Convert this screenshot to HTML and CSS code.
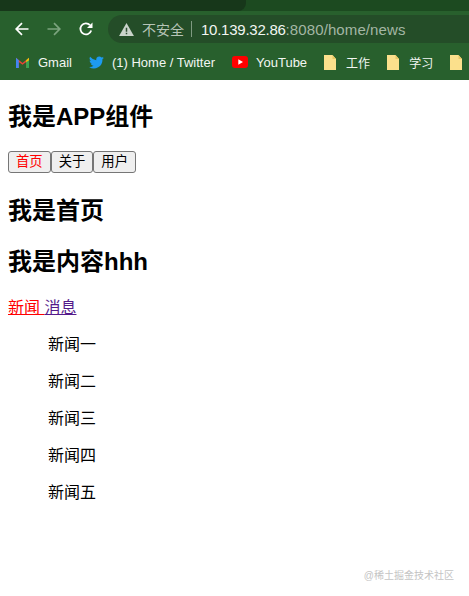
FILE: index.html
```html
<!DOCTYPE html>
<html lang="zh-CN">
<head>
    <meta charset="UTF-8">
    <title>Document</title>
    <link rel="stylesheet" href="styles.css">
</head>
<body>
  <div class="browser">
    <div class="tabstrip"><div class="tab"></div></div>
    <div class="toolbar">
      <svg class="nav" viewBox="0 0 16 16"><path d="M14.5 8H2.5M8 2.2L2.2 8L8 13.8" fill="none" stroke="#fff" stroke-width="1.7"/></svg>
      <svg class="nav" viewBox="0 0 16 16"><path d="M1.5 8H13.5M8 2.2L13.8 8L8 13.8" fill="none" stroke="#7ba37e" stroke-width="1.7"/></svg>
      <svg class="nav" viewBox="0 0 16 16"><path d="M13.2 9.5A5.5 5.5 0 1 1 12 4.2" fill="none" stroke="#fff" stroke-width="1.8"/><path d="M14.5 1.5V7H9Z" fill="#fff"/></svg>
      <div class="omnibox">
        <svg class="warn" viewBox="0 0 16 14"><path d="M8 0L16 14H0Z" fill="#c9d3ca"/><path d="M7.2 5H8.8V9.5H7.2ZM7.2 10.5H8.8V12H7.2Z" fill="#2e4c30"/></svg>
        <span class="insecure">不安全</span>
        <span class="divider"></span>
        <span class="url">10.139.32.86<span class="url-rest">:8080/home/news</span></span>
      </div>
    </div>
    <div class="bookmarks">
      <div class="mark">
        <svg class="mark-icon" viewBox="0 0 16 14"><path d="M1 13V2L8 7.5L15 2V13H12V6.5L8 9.500L4 6.500V13Z" fill="#ea4335"/><path d="M1 13V2L4 4.500V13Z" fill="#4285f4"/><path d="M15 13V2L12 4.500V13Z" fill="#34a853"/><path d="M12 4.500L15 2V4.500L12 6.800Z" fill="#fbbc04"/></svg>
        <span>Gmail</span>
      </div>
      <div class="mark">
        <svg class="mark-icon" viewBox="0 0 16 14"><path d="M16 2c-.6.3-1.200.4-1.900.5.700-.4 1.200-1 1.400-1.800-.6.4-1.300.7-2.100.8A3.300 3.300 0 0 0 7.800 4.500 9.300 9.300 0 0 1 1.100.9a3.300 3.300 0 0 0 1 4.400c-.5 0-1-.2-1.500-.4 0 1.600 1.100 3 2.600 3.300-.5.100-1 .1-1.500 0 .4 1.300 1.600 2.200 3.100 2.300A6.600 6.600 0 0 1 0 11.800 9.300 9.300 0 0 0 14.400 3.500c.6-.4 1.200-.9 1.600-1.500Z" fill="#1d9bf0"/></svg>
        <span>(1) Home / Twitter</span>
      </div>
      <div class="mark">
        <svg class="yt-icon" viewBox="0 0 16 12"><rect width="16" height="12" rx="3" fill="#f00"/><path d="M6.300 3.300L11 6L6.300 8.700Z" fill="#fff"/></svg>
        <span>YouTube</span>
      </div>
      <div class="mark folder-mark">
        <svg class="folder" viewBox="0 0 12 15"><path d="M0 0H8.500L12 4V15H0Z" fill="#fbe08c"/><path d="M8.500 0L12 4H8.500Z" fill="#e8c766"/></svg>
        <span>工作</span>
      </div>
      <div class="mark folder-mark">
        <svg class="folder" viewBox="0 0 12 15"><path d="M0 0H8.500L12 4V15H0Z" fill="#fbe08c"/><path d="M8.500 0L12 4H8.500Z" fill="#e8c766"/></svg>
        <span>学习</span>
      </div>
      <div class="mark folder-mark">
        <svg class="folder" viewBox="0 0 12 15"><path d="M0 0H8.500L12 4V15H0Z" fill="#fbe08c"/><path d="M8.500 0L12 4H8.500Z" fill="#e8c766"/></svg>
      </div>
    </div>
  </div>

  <div class="page">
    <h2>我是APP组件</h2>
    <div class="buttons">
      <button class="active">首页</button><button>关于</button><button>用户</button>
    </div>
    <h2>我是首页</h2>
    <h2>我是内容hhh</h2>
    <p class="links">
      <a class="link-active" href="#">新闻 </a>
      <a class="link-visited" href="#">消息</a>
    </p>
    <ul class="news">
      <li>新闻一</li>
      <li>新闻二</li>
      <li>新闻三</li>
      <li>新闻四</li>
      <li>新闻五</li>
    </ul>
  </div>

  <div class="watermark">@稀土掘金技术社区</div>
</body>
</html>
```

FILE: styles.css
```css
html, body {
  height: 596px;
  overflow: hidden;
}

body {
  box-sizing: border-box;
  margin: 0;
  padding: 0;
  color: black;
  background-color: #fff;
  font-family: "Liberation Sans", "Noto Sans CJK SC", sans-serif;
  position: relative;
}

.browser {
  height: 80px;
  background-color: #28602d;
  overflow: hidden;
}

.tabstrip {
  height: 11px;
  background-color: #1c4a20;
}

.tab {
  width: 246px;
  height: 11px;
  background-color: #17371a;
  border-radius: 0 0 8px 0;
}

.toolbar {
  display: flex;
  align-items: center;
  height: 36px;
  padding-left: 14px;
}

.nav {
  width: 16px;
  height: 16px;
  margin-right: 16px;
  flex: none;
}

.omnibox {
  display: flex;
  align-items: center;
  flex: 1;
  height: 28px;
  margin-left: -2px;
  padding-left: 11px;
  background-color: #244d28;
  border-radius: 14px 0 0 14px;
}

.warn {
  width: 15px;
  height: 13px;
  flex: none;
}

.insecure {
  margin-left: 8px;
  font-size: 14px;
  color: #b6c4b7;
}

.divider {
  width: 1px;
  height: 16px;
  margin: 0 9px 0 7px;
  background-color: #7f9a81;
}

.url {
  font-size: 15px;
  color: #f2f6f2;
  white-space: nowrap;
  letter-spacing: -0.25px;
}

.url-rest {
  color: #a3b6a4;
  letter-spacing: 0.1px;
}

.bookmarks {
  display: flex;
  align-items: center;
  gap: 17px;
  height: 30px;
  padding-left: 15px;
  font-size: 13px;
  color: #f2f6f2;
  white-space: nowrap;
}

.mark {
  display: flex;
  align-items: center;
  gap: 8px;
}

.folder-mark {
  gap: 10px;
  font-size: 12px;
}

.mark-icon {
  width: 15px;
  height: 13px;
  flex: none;
}

.yt-icon {
  width: 16px;
  height: 12px;
  flex: none;
}

.folder {
  width: 12px;
  height: 15px;
  flex: none;
}

.page {
  padding: 1px 8px 0;
}

h2 {
  font-size: 24px;
  line-height: 31px;
  margin: 20px 0;
}

.buttons {
  display: flex;
  height: 24px;
  margin-top: -1px;
  align-items: flex-start;
}

button {
  padding: 1px 7px;
  font-size: 13.333px;
  line-height: 18px;
  font-family: inherit;
  background-color: #efefef;
  border: 1px solid #767676;
  border-radius: 3px;
  color: black;
}

.active {
  color: red;
}

.links {
  margin: 16px 0;
  font-size: 16px;
  line-height: 21px;
}

.link-active {
  color: red;
}

.link-visited {
  color: #551a8b;
}

.news {
  list-style: none;
  margin: 0;
  padding-left: 40px;
}

.news li {
  line-height: 21px;
  margin-bottom: 16px;
}

.watermark {
  position: absolute;
  right: 15px;
  bottom: 14px;
  font-size: 10px;
  color: #c4c4c4;
}
```
